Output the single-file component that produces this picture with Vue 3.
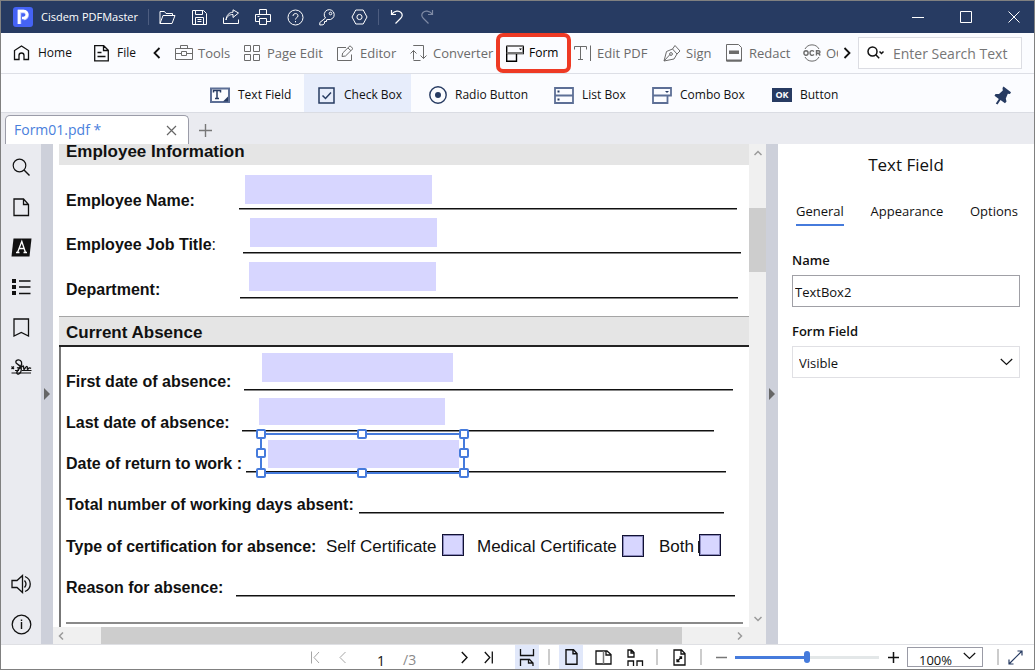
<script setup>
import { h, ref } from 'vue'

const icons = {
  open: [17, 15, '<path d="M1 13.5V1.5h4.5l1.5 2h6.5v2M1 13.5l3-8h12l-3 8z"/>'],
  save: [15, 15, '<path d="M.5.5h11l3 3v11H.5z"/><path d="M3.5.5v4h7v-4M3.5 14.5v-7h8v7M5.5 9.5h4M5.5 11.5h4"/>'],
  share: [17, 16, '<path d="M.5 8.500v6h15v-4"/><path d="M3 11C4 7 6.500 5.500 10 5.500V8.500L15.500 4 10 .8V3.200C6 3.500 3.500 6 3 11z"/>'],
  print: [17, 16, '<path d="M4.500 5.500v-5h7v5M4.500 12.500h-4v-7h15v7h-4"/><path d="M4.500 9.500h7v6h-7zM2.500 7.500h2"/>'],
  help: [17, 17, '<circle cx="8.500" cy="8.500" r="7.500"/><path d="M6 7C6 3.800 11 3.800 11 6.800 11 8.800 8.500 8.500 8.500 10.500M8.500 12v1.300"/>'],
  key: [16, 17, '<path d="M6.500 9A5 5 0 1 1 9 10.500L7.500 10.800V12.500H5.500V14.500L4 15.800.8 16V13.500z"/><circle cx="11.500" cy="4.500" r="1.300"/>'],
  gear: [17, 16, '<path d="M4.800 1h7.400l3.800 7-3.800 7H4.800L1 8z"/><circle cx="8.500" cy="8" r="2.600"/>'],
  undo: [14, 16, '<path d="M1.500 1v4.500H6M1.700 5.200C5 1.500 9 1.500 11 3.500c2 2.200 1 4.500-.5 6l-5 5" stroke-width="1.200"/>'],
  redo: [14, 16, '<path d="M12.500 1v4.500H8M12.300 5.200C9 1.500 5 1.500 3 3.500c-2 2.200-1 4.500.5 6l5 5" stroke-width="1.200"/>'],
  min: [13, 13, '<path d="M0 6.500h12"/>'],
  max: [13, 13, '<path d="M.5.5h11v11H.5z"/>'],
  close: [13, 13, '<path d="M.5.5l11 11M11.500.5l-11 11"/>'],
  home: [17, 16, '<path d="M6 14.500H1.500v-9L8.500 1l7 4.500v9H11V10.500a2.500 2.500 0 0 0-5 0z" stroke-width="1.300"/>'],
  file: [15, 17, '<path d="M.7 .7h9l4.600 4.600v10.500H.7zM9.500.7v4.800h4.800M3.500 7.500h4M3.500 11.500h8" stroke-width="1.300"/>'],
  left: [8, 12, '<path d="M6.500 1L1.500 6l5 5" stroke-width="1.800"/>'],
  right: [8, 12, '<path d="M1.500 1l5 5-5 5" stroke-width="1.800"/>'],
  tools: [18, 16, '<path d="M.5 3.500h17v11H.5zM5.500 3.500v-3h7v3M.5 8.500h6M11.500 8.500h6M6.500 6.500h5v4h-5z"/>'],
  grid: [17, 17, '<path d="M.5.5h6v6h-6zM9.500.5h6v6h-6zM.5 9.500h6v6h-6zM9.500 9.500h6v6h-6z"/>'],
  editor: [17, 17, '<path d="M9 2.500H.5v13h14v-6"/><path d="M5 11.500l.7-3.500L13 .8l3 2.800L8.500 11zM11 3l3 2.800"/>'],
  convert: [17, 17, '<path d="M3.500 14.500V5.500M.5 8.500l3-3 3 3M3.500 1v-.5h10v13M16.500 10.500l-3 3-3-3M3.500 15.500h7"/>'],
  form: [18, 17, '<path d="M.7 .7v15.500h9.800V8.500M.7 8.500h16.600V.7" stroke-width="1.400"/><path d="M.7 1h16.600M.7 8h16.600" stroke="#777" stroke-width="2"/><path d="M13 3.500h3l-1.500 1.800z" fill="currentColor" stroke="none"/>'],
  editpdf: [18, 17, '<path d="M.5 4.500v-3h12v3M6.500 1.500v13M4 14.500h5M16.500.5v15.500"/>'],
  sign: [18, 17, '<path d="M1 16L3.500 6.500 9.500 4 14 9 11 14zM1 16l6-6.500M9.500 4l2.500-3.500 5 5.500L14 9"/><circle cx="8" cy="9" r="1.400"/>'],
  redact: [17, 18, '<path d="M.5.5h12l3 3v13.500H.5z"/><path d="M3 6.500h10v3.500H3z" fill="currentColor" stroke="none"/><path d="M.5 16.500h15" stroke-width="2"/>'],
  ocr: [18, 18, '<path d="M2 5A8 8 0 0 1 16 5M2 13A8 8 0 0 0 16 13"/><path d="M3 6.700c2.800 0 2.800 4.600 0 4.600s-2.800-4.600 0-4.600M11 7.500C8.500 5.500 7 7.500 7 9s1.500 3.500 4 1.500M13.500 11.500v-4.700h2c2 0 2 2.500 0 2.500h-2M15.500 9.300l1.700 2.200" stroke-width="1.400"/>'],
  search: [18, 14, '<circle cx="5.500" cy="5.500" r="4.500" stroke-width="1.500"/><path d="M8.800 8.800l3.400 3.400M12.500 5.500l2 2 2-2" stroke-width="1.500"/>'],
  textfield: [20, 17, '<path d="M1 1.500h18v13.500H1z" stroke="#5d6f96" stroke-width="2"/><path d="M3.500 5.500v-2h7v2M7 3.500v7.500M5 11.500h4" stroke-width="1.500"/><path d="M18 9.500V14.500h-5z" fill="currentColor" stroke="none"/>'],
  checkbox: [18, 17, '<path d="M1 1h15v15H1z" stroke-width="1.500"/><path d="M4.500 8.500l3 3 5.500-6" stroke-width="1.500"/>'],
  radio: [18, 18, '<circle cx="9" cy="9" r="8.200" stroke-width="1.400"/><circle cx="9" cy="9" r="3" fill="currentColor" stroke="none"/>'],
  listbox: [20, 17, '<path d="M1 1h18v15H1zM1 8.500h18" stroke="#5d6f96" stroke-width="1.800"/><path d="M3.500 4.500h2M3.500 12.500h2" stroke-width="2"/>'],
  combo: [20, 17, '<path d="M1 1h18v7.500H1zM1 8.500V16h14.500V8.500" stroke="#5d6f96" stroke-width="1.800"/><path d="M13 4h4l-2 2z" fill="currentColor" stroke="none"/>'],
  pin: [18, 19, '<path d="M9.500.5L17 6.200 16 8 13.800 7.800 11.800 12.500 12.500 15.500 11 17.200 6.500 14 3.500 18.500 1.800 17.500 4.800 13 .5 9.800 1.500 8 5 8 8.800 4.500 8.500 2z" fill="currentColor" stroke="none"/>'],
  x: [11, 11, '<path d="M1 1l9 9M10 1L1 10" stroke-width="1.200"/>'],
  plus: [13, 13, '<path d="M6.500 0v13M0 6.500h13" stroke-width="1.400"/>'],
  find: [19, 19, '<circle cx="7.500" cy="7.500" r="6.300" stroke-width="1.200"/><path d="M12 12l5.500 5.500" stroke-width="1.400"/>'],
  page: [17, 19, '<path d="M1 1h9.500L15.500 6.500V17.500H1zM10.500 1v5.500H15.500" stroke-width="1.300"/>'],
  letter: [21, 19, '<path d="M2.500.5h18l-2 18H.5z" fill="currentColor" stroke="none"/><path d="M5 14.500h3.500M12.500 14.500h3.500M6.500 14.500L10.800 3.500l3.700 11M8.200 10.500h5" stroke="#fff" stroke-width="1.300"/>'],
  list: [19, 18, '<path d="M0 1h4v4H0zM0 7h4v4H0zM0 13h4v4H0z" fill="currentColor" stroke="none"/><path d="M7 3h11.500M7 9h11.500M7 15.500h11.500" stroke-width="1.300"/>'],
  bookmark: [17, 19, '<path d="M1 1h14.500v17L8.300 14.500 1 18z" stroke-width="1.300"/>'],
  signature: [21, 17, '<path d="M.5 7.500l2.500 2.500M3 7.500L.5 10M4 11.500h4M11 11.500h9.500M.5 14h19.500" stroke-width="1.200"/><path d="M6 8.500C8.500 10 11.500 6.500 10.500 3 9.500 0 5 .500 4.800 3 4.500 5.500 11 5.500 10.300 11c-.3 4-4.500 5.500-4.500 2.500S9 9.500 12 7c1-.5.3 3.500 1 3.500S15 7 16 7.500s-.3 2.500.5 2.800S18 7.500 20 9.500" stroke-width="1.300"/>'],
  sound: [21, 20, '<path d="M1 6.500h5L11.500 1.500v17L6 13.500H1zM13.500 6.500q3 3.500 0 7M14 2.500c7 3 7 12 0 15" stroke-width="1.300"/>'],
  info: [21, 21, '<circle cx="10.500" cy="10.500" r="9.300" stroke-width="1.300"/><path d="M10.500 8v7M10.500 5.500v1.500" stroke-width="1.400"/>'],
  first: [9, 13, '<path d="M.5.500v12M8 1L3 6.500 8 12"/>'],
  prev: [7, 13, '<path d="M6.500 1L1 6.500 6.500 12"/>'],
  next: [7, 13, '<path d="M.8 1l5.200 5.500L.8 12" stroke-width="1.400"/>'],
  last: [9, 13, '<path d="M8.300.5v12M.8 1l5 5.500L.8 12" stroke-width="1.300"/>'],
  fitwidth: [16, 17, '<path d="M1.500 0v6.500h13V0M1.500 17v-6.500h9l3.500 3.500v3M9.500 10.500v3.500h4.500" stroke-width="1.300"/>'],
  single: [13, 16, '<path d="M1 .8h7.500L12 4.500v10.700H1zM8 .8v4h4" stroke-width="1.400"/>'],
  double: [17, 15, '<path d="M1 1h11l4 3.500V14H1zM11 1v4h5" stroke-width="1.300"/><path d="M8.500 1v13" stroke="#777" stroke-width="1.500"/>'],
  thumbs: [17, 17, '<path d="M1 1h3.500L7 3.500V8H1zM4 1v3h3M1 17v-5h5.500v5M10 17v-5h5.500v5" stroke-width="1.300"/>'],
  fitpage: [13, 17, '<path d="M1 1h7.500L12 4.500V16H1zM8 1v4h4" stroke-width="1.300"/><path d="M4 12.500l4.500-4.500M4 10v2.500h2.500M6.500 8h2v2" stroke-width="1.300"/>'],
  minus: [11, 11, '<path d="M0 5.500h11" stroke-width="1.500"/>'],
  add: [11, 11, '<path d="M0 5.500h11M5.500 0v11" stroke-width="1.500"/>'],
  expand: [15, 15, '<path d="M1 14L14 1M1 9.500V14h4.500M9.500 1H14v4.500" stroke-width="1.200"/>'],
  down: [13, 8, '<path d="M.8 1l5.700 5.500L12.200 1" stroke-width="1.200"/>'],
  sup: [8, 6, '<path d="M.5 5L4 1.500 7.500 5" stroke-width="1.500"/>'],
  sdown: [8, 6, '<path d="M.5 1L4 4.500 7.500 1" stroke-width="1.500"/>'],
  sleft: [6, 8, '<path d="M5 .5L1.500 4 5 7.500" stroke-width="1.500"/>'],
  sright: [6, 8, '<path d="M1 .5L4.500 4 1 7.500" stroke-width="1.500"/>'],
  tri: [6, 12, '<path d="M0 0l6 6-6 6z" fill="currentColor" stroke="none"/>']
}

const Icon = ({ n }) => {
  const [w, ht, body] = icons[n]
  return h('svg', {
    width: w, height: ht, viewBox: `0 0 ${w} ${ht}`, fill: 'none',
    stroke: 'currentColor', 'stroke-width': 1, 'aria-hidden': 'true', innerHTML: body
  })
}
Icon.props = ['n']

const quick = [
  ['open', 'Open'], ['save', 'Save'], ['share', 'Share'], ['print', 'Print'],
  ['help', 'Help'], ['key', 'License'], ['gear', 'Settings']
]
const tools = [
  ['tools', 'Tools'], ['grid', 'Page Edit'], ['editor', 'Editor'], ['convert', 'Converter'],
  ['form', 'Form'], ['editpdf', 'Edit PDF'], ['sign', 'Sign'], ['redact', 'Redact'], ['ocr', 'OCR']
]
const formTools = [
  ['textfield', 'Text Field'], ['checkbox', 'Check Box'], ['radio', 'Radio Button'],
  ['listbox', 'List Box'], ['combo', 'Combo Box'], ['ok', 'Button']
]
const rail = [
  ['find', 'Search'], ['page', 'Pages'], ['letter', 'Annotations'],
  ['list', 'Outline'], ['bookmark', 'Bookmarks'], ['signature', 'Signatures']
]
const employeeRows = [
  { label: 'Employee Name:', start: 173, line: 498 },
  { label: 'Employee Job Title', tail: ':', start: 177, line: 498 },
  { label: 'Department:', start: 174, line: 498 }
]
const absenceRows = [
  { label: 'First date of absence:', start: 178, line: 489 },
  { label: 'Last date of absence:', start: 176, line: 472 },
  { label: 'Date of return to work :', start: 180, line: 480 },
  { label: 'Total number of working days absent:', start: 293, line: 365 }
]
const fields = [
  { name: 'Employee Name', x: 192, y: 31, w: 187, h: 29 },
  { name: 'Employee Job Title', x: 197, y: 74, w: 187, h: 29 },
  { name: 'Department', x: 196, y: 118, w: 187, h: 29 },
  { name: 'First date of absence', x: 209, y: 209, w: 191, h: 29 },
  { name: 'Last date of absence', x: 206, y: 254, w: 186, h: 27 },
  { name: 'Date of return to work', x: 215, y: 296, w: 191, h: 28 }
]
const checks = [
  { name: 'Self Certificate', x: 389, y: 390 },
  { name: 'Medical Certificate', x: 569, y: 391 },
  { name: 'Both', x: 646, y: 390 }
]
const handles = ['nw', 'n', 'ne', 'w', 'e', 'sw', 's', 'se']
const place = f => ({ left: f.x + 'px', top: f.y + 'px', width: f.w + 'px', height: f.h + 'px' })

const fieldName = ref('TextBox2')
const zoom = ref(50)
const pageNo = ref('1')
</script>

<template>
  <div class="window">
    <header class="titlebar">
      <svg class="logo" width="20" height="20" viewBox="0 0 20 20" aria-hidden="true">
        <rect width="20" height="20" rx="3" fill="#4563f5" />
        <path d="M6.500 17V4.500h4.200a3.500 3.500 0 0 1 0 7" fill="none" stroke="#c3cdff" stroke-width="3.400" />
        <path d="M6 17V4h4.500a3.500 3.500 0 0 1 0 7H9" fill="none" stroke="#fff" stroke-width="2.600" />
      </svg>
      <span class="app-name">Cisdem PDFMaster</span>
      <i class="bar"></i>
      <nav class="quick">
        <button v-for="q in quick" :key="q[0]" :aria-label="q[1]"><Icon :n="q[0]" /></button>
      </nav>
      <i class="bar"></i>
      <button class="undo" aria-label="Undo"><Icon n="undo" /></button>
      <button class="redo" aria-label="Redo"><Icon n="redo" /></button>
      <div class="winctl">
        <button aria-label="Minimize"><Icon n="min" /></button>
        <button aria-label="Maximize"><Icon n="max" /></button>
        <button aria-label="Close"><Icon n="close" /></button>
      </div>
    </header>

    <div class="toolbar">
      <button class="main home"><Icon n="home" />Home</button>
      <button class="main file"><Icon n="file" />File</button>
      <button class="scroll" aria-label="Scroll left"><Icon n="left" /></button>
      <div class="tools">
        <button v-for="t in tools" :key="t[0]" :class="{ current: t[0] === 'form' }">
          <span class="ico"><Icon :n="t[0]" /></span>{{ t[1] }}
        </button>
      </div>
      <button class="scroll" aria-label="Scroll right"><Icon n="right" /></button>
      <label class="search">
        <Icon n="search" />
        <input type="text" placeholder="Enter Search Text" aria-label="Enter Search Text" />
      </label>
    </div>

    <div class="subbar">
      <div class="formtools">
        <button v-for="t in formTools" :key="t[0]" :class="{ on: t[0] === 'checkbox' }">
          <span v-if="t[0] === 'ok'" class="ok">OK</span>
          <Icon v-else :n="t[0]" />
          {{ t[1] }}
        </button>
      </div>
      <button class="pin" aria-label="Pin toolbar"><Icon n="pin" /></button>
    </div>

    <div class="tabs">
      <div class="tab">
        <a href="#doc">Form01.pdf *</a>
        <button aria-label="Close tab"><Icon n="x" /></button>
      </div>
      <button class="newtab" aria-label="New tab"><Icon n="plus" /></button>
    </div>

    <main class="main-area">
      <nav class="rail">
        <button v-for="r in rail" :key="r[0]" :aria-label="r[1]"><Icon :n="r[0]" /></button>
        <span class="grow"></span>
        <button aria-label="Read aloud"><Icon n="sound" /></button>
        <button aria-label="Information"><Icon n="info" /></button>
      </nav>
      <button class="splitter" aria-label="Toggle left panel"><Icon n="tri" /></button>

      <section class="viewer">
        <div id="doc" class="page">
          <h2 class="band top"><span>Employee Information</span></h2>
          <div class="group">
            <div v-for="r in employeeRows" :key="r.label" class="row">
              <span class="label" :style="{ width: r.start + 'px' }">{{ r.label }}<span v-if="r.tail" class="plain">{{ r.tail }}</span></span>
              <span class="line" :style="{ width: r.line + 'px' }"></span>
            </div>
          </div>
          <h2 class="band"><span>Current Absence</span></h2>
          <div class="group boxed">
            <div v-for="r in absenceRows" :key="r.label" class="row">
              <span class="label" :style="{ width: r.start + 'px' }">{{ r.label }}</span>
              <span class="line" :style="{ width: r.line + 'px' }"></span>
            </div>
            <div class="row certs">
              <span class="label">Type of certification for absence:</span>
              <span class="cert self">Self Certificate</span>
              <span class="cert medical">Medical Certificate</span>
              <span class="cert">Both</span>
              <i class="tick"></i>
            </div>
            <div class="row">
              <span class="label" :style="{ width: '170px' }">Reason for absence:</span>
              <span class="line" :style="{ width: '499px' }"></span>
            </div>
            <hr />
          </div>

          <input v-for="f in fields" :key="f.name" class="field" type="text" :aria-label="f.name" :style="place(f)" />
          <input v-for="c in checks" :key="c.name" class="check" type="checkbox" :aria-label="c.name" :style="{ left: c.x + 'px', top: c.y + 'px' }" />
          <div class="selection">
            <i v-for="p in handles" :key="p" :class="p"></i>
          </div>
        </div>
        <div class="vscroll">
          <Icon n="sup" />
          <div class="vtrack"><div class="vthumb"></div></div>
          <Icon n="sdown" />
        </div>
        <div class="hscroll">
          <Icon n="sleft" />
          <div class="htrack"><div class="hthumb"></div></div>
          <Icon n="sright" />
        </div>
        <div class="corner"></div>
      </section>

      <button class="splitter" aria-label="Toggle properties"><Icon n="tri" /></button>
      <aside class="panel">
        <h1>Text Field</h1>
        <div class="ptabs">
          <button class="on">General</button>
          <button>Appearance</button>
          <button>Options</button>
        </div>
        <label for="fname">Name</label>
        <input id="fname" v-model="fieldName" type="text" />
        <label for="fvis">Form Field</label>
        <div class="select">
          <select id="fvis">
            <option>Visible</option>
            <option>Hidden</option>
          </select>
          <Icon n="down" />
        </div>
      </aside>
    </main>

    <footer class="status">
      <div class="pager">
        <button class="dim" aria-label="First page"><Icon n="first" /></button>
        <button class="dim" aria-label="Previous page"><Icon n="prev" /></button>
        <input v-model="pageNo" type="text" aria-label="Page number" />
        <span class="total">/3</span>
        <button aria-label="Next page"><Icon n="next" /></button>
        <button aria-label="Last page"><Icon n="last" /></button>
      </div>
      <div class="views">
        <button class="on" aria-label="Scrolling"><Icon n="fitwidth" /></button>
        <i class="sep"></i>
        <button class="on" aria-label="Single page"><Icon n="single" /></button>
        <button aria-label="Two pages"><Icon n="double" /></button>
        <button aria-label="Page thumbnails"><Icon n="thumbs" /></button>
        <i class="sep"></i>
        <button aria-label="Fit page"><Icon n="fitpage" /></button>
        <i class="sep"></i>
      </div>
      <div class="zoom">
        <button class="less" aria-label="Zoom out"><Icon n="minus" /></button>
        <input v-model="zoom" type="range" min="0" max="100" aria-label="Zoom" />
        <button aria-label="Zoom in"><Icon n="add" /></button>
        <div class="zsel">
          <select aria-label="Zoom level"><option>100%</option><option>200%</option></select>
          <Icon n="down" />
        </div>
        <i class="sep"></i>
        <button class="expand" aria-label="Full screen"><Icon n="expand" /></button>
      </div>
    </footer>
  </div>
</template>

<style>
html, body { margin: 0; }
</style>

<style scoped>
* { box-sizing: border-box; }
.window {
  display: flex;
  flex-direction: column;
  height: 100vh;
  overflow: hidden;
  border: 1px solid #808080;
  background: #fff;
  color: #111;
  font: 12px/16px "Open Sans", "Noto Sans", sans-serif;
}
button, input, select { font: inherit; color: inherit; }
button {
  display: flex;
  align-items: center;
  justify-content: center;
  margin: 0;
  padding: 0;
  border: 0;
  background: none;
  white-space: nowrap;
}
svg { flex: none; display: block; }

.titlebar {
  flex: none;
  display: flex;
  align-items: center;
  height: 32px;
  padding-left: 12px;
  background: #273b62;
  color: #fff;
}
.app-name { width: 115px; padding-left: 8px; font-size: 11px; white-space: nowrap; }
.bar { width: 1px; height: 16px; background: #4d5d80; }
.quick { display: flex; padding: 0 3px 0 2px; }
.quick button { width: 32px; height: 32px; }
.undo, .redo { width: 30px; height: 32px; }
.undo { margin-left: 3px; }
.redo { color: #7e8aa4; }
.winctl { display: flex; gap: 8px; margin-left: auto; }
.winctl button { width: 40px; height: 32px; }

.toolbar {
  flex: none;
  display: flex;
  align-items: center;
  height: 41px;
  padding-right: 12px;
  border-bottom: 1px solid #dddfe6;
  background: #fbfcff;
}
.main { justify-content: flex-start; gap: 8px; height: 40px; }
.home { width: 82px; padding-left: 12px; }
.file { width: 65px; padding-left: 11px; }
.scroll { width: 18px; height: 40px; }
.tools {
  flex: 1;
  min-width: 0;
  display: grid;
  grid-template-columns: 69px 93px 73px 96px 68px 89px 63px 77px 60px;
  padding-left: 9px;
  overflow: hidden;
}
.tools button {
  position: relative;
  justify-content: flex-start;
  height: 40px;
  color: #6b6b6b;
  font-size: 13px;
}
.ico { flex: none; width: 23px; }
.tools .current { color: #000; font-size: 12px; }
.tools .current::after {
  content: "";
  position: absolute;
  inset: 0 3px 0 -10px;
  border: 4px solid #ee3a24;
  border-radius: 7px;
}
.search {
  display: flex;
  align-items: center;
  flex: none;
  width: 164px;
  height: 32px;
  margin-left: 2px;
  padding-left: 8px;
  border: 1px solid #dcdde3;
  background: #fff;
}
.search input {
  flex: 1;
  min-width: 0;
  height: 28px;
  margin-left: 8px;
  padding: 0;
  border: 0;
  background: none;
  font-size: 14px;
}
.search input::placeholder { color: #767676; opacity: 1; }

.subbar {
  flex: none;
  display: flex;
  justify-content: space-between;
  height: 39px;
  padding: 0 22px 0 195px;
  border-bottom: 1px solid #dadce3;
  background: #fbfcff;
}
.subbar button { padding-top: 4px; }
.formtools {
  display: grid;
  grid-template-columns: 108px 111px 125px 98px 120px 92px;
}
.formtools button {
  justify-content: flex-start;
  gap: 8px;
  margin-right: 4px;
  padding-left: 14px;
}
.formtools button svg { color: #273b62; }
.formtools .on { background: #e7edfb; }
.ok {
  width: 20px;
  height: 14px;
  background: #273b62;
  color: #fff;
  font-size: 9px;
  font-weight: 700;
  line-height: 14px;
  text-align: center;
}
.pin { color: #273b62; }

.tabs {
  flex: none;
  display: flex;
  align-items: flex-end;
  height: 31px;
  padding-left: 4px;
  background: #eaebf0;
}
.tab {
  display: flex;
  align-items: center;
  justify-content: space-between;
  width: 184px;
  height: 29px;
  padding: 0 11px 0 8px;
  border: 1px solid #9b9ca8;
  border-bottom: 0;
  border-radius: 5px 5px 0 0;
  background: #fff;
  color: #666;
}
.tab a { color: #4a80dc; font-size: 14px; text-decoration: none; }
.newtab { width: 32px; height: 28px; color: #777; }

.main-area { flex: 1; min-height: 0; display: flex; }
.rail {
  flex: none;
  display: flex;
  flex-direction: column;
  width: 40px;
  padding-top: 3px;
  background: #eaebf0;
}
.rail button { width: 40px; height: 40px; padding-left: 1px; }
.grow { flex: 1; }
.splitter { flex: none; width: 12px; background: #cdd0da; color: #666; }
.viewer {
  flex: 1;
  min-width: 0;
  display: grid;
  grid-template: minmax(0, 1fr) 17px / minmax(0, 1fr) 17px;
}
.page {
  position: relative;
  overflow: hidden;
  padding-left: 6px;
  font-family: "Liberation Sans", Arial, sans-serif;
  font-size: 16px;
  line-height: 18px;
}
.band {
  display: flex;
  align-items: center;
  height: 31px;
  margin: 0;
  padding: 3px 0 0 7px;
  border-top: 1px solid #a5a5a5;
  border-bottom: 2px solid #222;
  background: #e5e5e5;
  font-size: 17px;
}
.band.top { height: 21px; border: 0; padding: 0 0 6px 7px; }
.group { padding: 0 0 17px 7px; }
.boxed { padding: 0 0 20px 5px; border-left: 2px solid #777; }
.row { display: flex; align-items: flex-end; height: 44px; }
.row:first-child, .row:nth-child(3) { height: 45px; }
.boxed .row { height: 41px; }
.boxed .row:first-child { height: 44px; }
.boxed .certs { height: 42px; }
.label { flex: none; font-weight: 700; white-space: pre; }
.plain { font-weight: 400; }
.line { flex: none; height: 2px; border-top: 1px solid #111; background: #888; }
.cert { font-size: 17px; white-space: nowrap; }
.self { width: 151px; }
.medical { width: 182px; }
.certs .label { width: 260px; }
.tick { width: 1px; height: 12px; margin: 0 0 3px 4px; background: #222; }
hr { height: 2px; margin: 25px 6px 0 0; border: 0; background: #8a8a8a; }
.field {
  position: absolute;
  margin: 0;
  padding: 0 4px;
  border: 0;
  background: #d7d6ff;
}
.check {
  position: absolute;
  appearance: none;
  width: 22px;
  height: 22px;
  margin: 0;
  border: 1px solid #111133;
  box-shadow: inset 0 0 0 1px #8d8cc0;
  background: #d7d6ff;
}
.selection {
  position: absolute;
  left: 207px;
  top: 289px;
  width: 205px;
  height: 41px;
  border: 2px solid #467bdc;
}
.selection i {
  position: absolute;
  width: 10px;
  height: 10px;
  border: 2px solid #467bdc;
  border-radius: 2px;
  background: #fff;
}
.nw, .n, .ne { top: -6px; }
.w, .e { top: 13px; }
.sw, .s, .se { bottom: -6px; }
.nw, .w, .sw { left: -6px; }
.n, .s { left: 95px; }
.ne, .e, .se { right: -6px; }

.vscroll, .hscroll { display: flex; align-items: center; background: #f0f0f0; color: #9a9a9a; }
.vscroll { flex-direction: column; padding: 6px 0 5px; }
.hscroll { padding: 0 6px 0 5px; }
.vtrack { flex: 1; width: 100%; }
.vthumb { height: 14%; margin-top: 52px; background: #cdcdcd; }
.htrack { flex: 1; height: 100%; padding: 0 55px 0 37px; }
.hthumb { height: 100%; background: #cdcdcd; }
.corner { background: #f0f0f0; }

.panel {
  flex: none;
  width: 256px;
  padding: 9px 14px 0;
  display: flex;
  flex-direction: column;
  font-size: 13px;
}
.panel h1 { margin: 0; font-size: 17px; font-weight: 400; line-height: 24px; text-align: center; }
.ptabs { display: flex; justify-content: space-between; margin: 21px 2px 26px 4px; }
.ptabs button { height: 28px; border-bottom: 2px solid transparent; }
.ptabs .on { border-color: #467bdc; }
.panel label { font-weight: 600; line-height: 16px; margin-bottom: 7px; }
.panel > input { width: 100%; height: 32px; margin: 0 0 16px; padding: 2px 2px 0; border: 1px solid #a0a0a6; }
.select { position: relative; }
.select select, .zsel select { appearance: none; width: 100%; border: 1px solid #e0e0e4; border-radius: 0; background: #fff; }
.select select { height: 32px; padding: 2px 6px 0; }
.select svg { position: absolute; right: 7px; top: 12px; pointer-events: none; }

.status {
  flex: none;
  display: flex;
  height: 25px;
  padding-right: 7px;
  border-top: 1px solid #dfe0e4;
  background: #fff;
}
.status button { width: 24px; height: 24px; }
.sep { width: 2px; height: 16px; background: #ccc; }
.pager, .views, .zoom { display: flex; align-items: center; }
.pager { padding-left: 302px; }
.pager .dim { color: #a5a5a5; margin-right: 3px; }
.pager input { width: 24px; height: 24px; margin: 0 7px 0 12px; padding: 6px 0 0; border: 0; text-align: center; font-size: 14px; }
.total { width: 52px; padding: 6px 0 0 3px; color: #8a8a8a; font-size: 14px; }
.views { gap: 8px; padding-left: 15px; }
.views .sep { margin: 0 1px; }
.views .on { background: #e1e8fa; }
.zoom { margin-left: auto; }
.less { color: #777; }
.zoom input {
  appearance: none;
  width: 144px;
  height: 3px;
  margin: 0 2px;
  background: linear-gradient(to right, #467bdc 50%, #e3e7e8 50%);
}
.zoom input::-webkit-slider-thumb {
  appearance: none;
  width: 6px;
  height: 12px;
  border-radius: 3px;
  background: #467bdc;
}
.zsel { position: relative; width: 76px; height: 20px; margin: 0 14px 0 2px; }
.zsel select { height: 20px; padding: 5px 0 0 11px; border-color: #9a9ba6; font-size: 13px; line-height: 14px; }
.zsel svg { position: absolute; right: 7px; top: 5px; pointer-events: none; }
.zoom .expand { margin-left: 4px; color: #273b62; }
</style>
